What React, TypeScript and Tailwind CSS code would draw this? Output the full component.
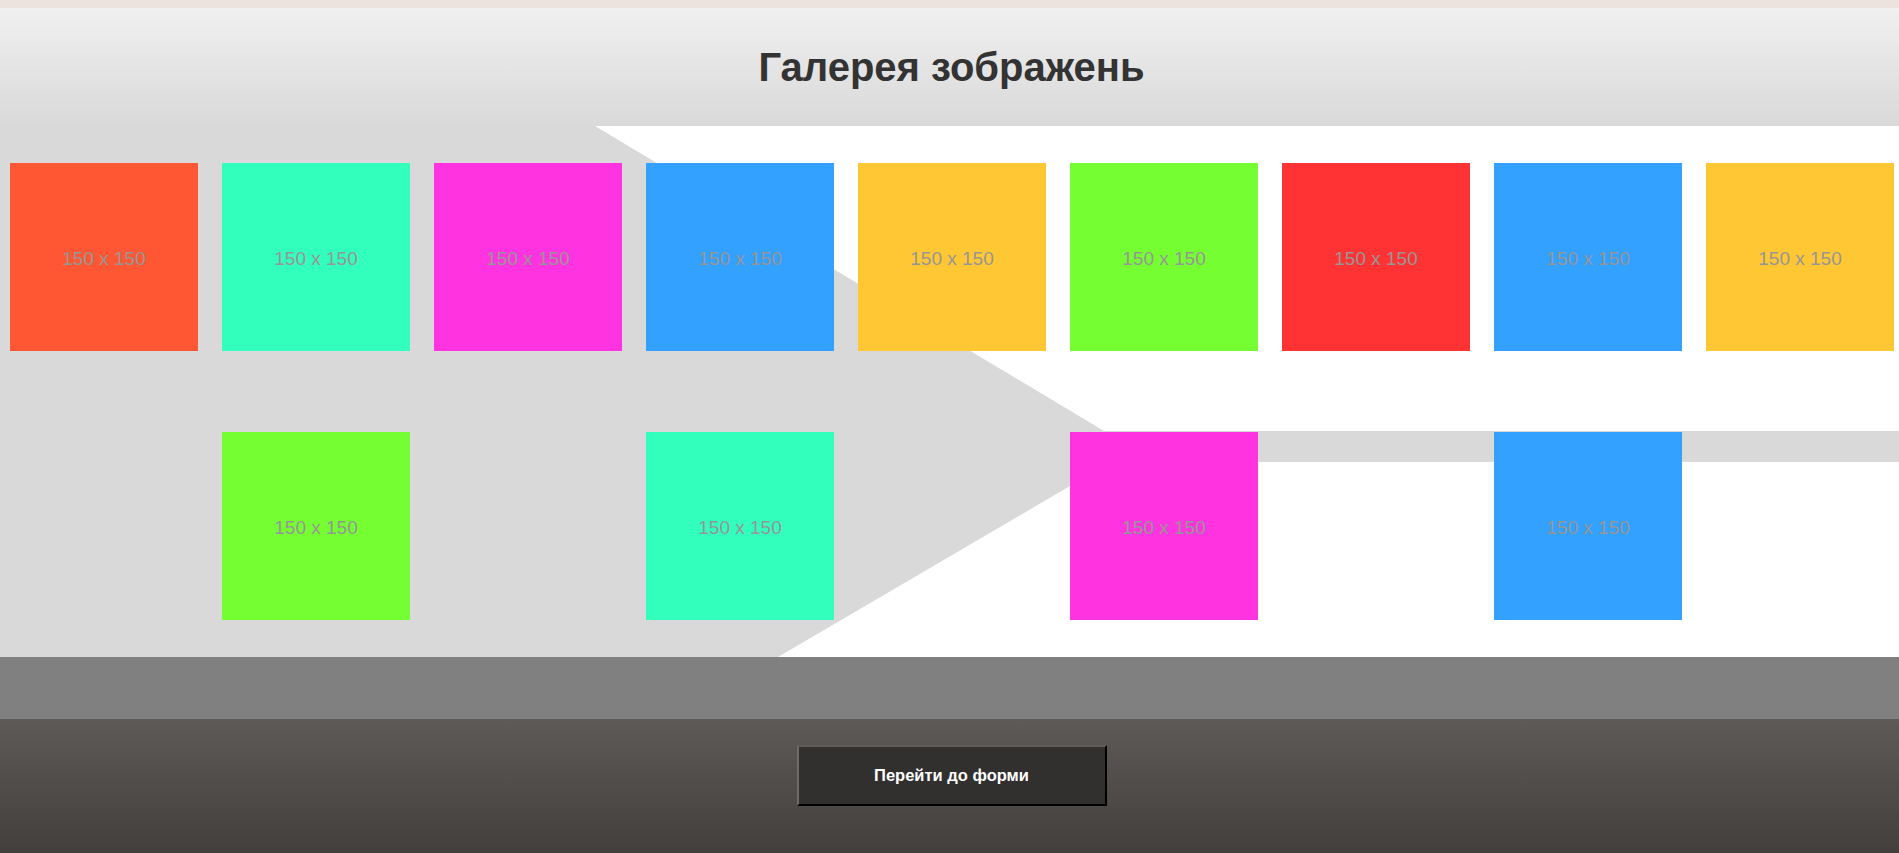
import React from "react";

type Cell = { color: string } | null;

const row1: Cell[] = [
  { color: "#FF5733" },
  { color: "#33FFBD" },
  { color: "#FF33E0" },
  { color: "#33A1FF" },
  { color: "#FFC733" },
  { color: "#75FF33" },
  { color: "#FF3333" },
  { color: "#33A1FF" },
  { color: "#FFC733" },
];

const row2: Cell[] = [
  null,
  { color: "#75FF33" },
  null,
  { color: "#33FFBD" },
  null,
  { color: "#FF33E0" },
  null,
  { color: "#33A1FF" },
  null,
];

function Tile({ cell }: { cell: Cell }) {
  if (!cell) return <div className="w-[188px] h-[188px]" />;
  return (
    <div
      className="w-[188px] h-[188px] pt-[4px] flex items-center justify-center text-[19px] text-[#969696]"
      style={{ backgroundColor: cell.color }}
    >
      150 x 150
    </div>
  );
}

export default function App() {
  return (
    <div className="w-full font-['Liberation_Sans',Arial,sans-serif]">
      <div className="h-[8px] bg-[#ece3de]" />
      <header className="h-[118px] flex items-center justify-center bg-gradient-to-b from-[#f0f0f0] to-[#d9d9d9]">
        <h1 className="text-[40px] font-bold text-[#333333] leading-none pl-[4px]">Галерея зображень</h1>
      </header>
      <section className="relative bg-white h-[531px] overflow-hidden">
        <svg
          className="absolute inset-0 w-full h-full"
          viewBox="0 0 1899 531"
          preserveAspectRatio="none"
        >
          <polygon
            points="0,0 595,0 1104,305 1899,305 1899,336 1111,336 778,531 0,531"
            fill="#d9d9d9"
          />
        </svg>
        <div className="relative pt-[37px] pl-[10px] grid grid-cols-[repeat(9,188px)] gap-x-[24px] gap-y-[81px]">
          {row1.map((c, i) => (
            <Tile key={"a" + i} cell={c} />
          ))}
          {row2.map((c, i) => (
            <Tile key={"b" + i} cell={c} />
          ))}
        </div>
      </section>
      <div className="h-[62px] bg-[#808080]" />
      <footer className="h-[134px] pt-[26px] pl-[4px] flex justify-center bg-gradient-to-b from-[#5e5a58] to-[#433f3d]">
        <button className="w-[310px] h-[61px] bg-[#32302e] text-white font-bold text-[16.5px] border-2 border-t-[#5f5b59] border-l-[#6e6a68] border-r-black border-b-black">
          Перейти до форми
        </button>
      </footer>
    </div>
  );
}
